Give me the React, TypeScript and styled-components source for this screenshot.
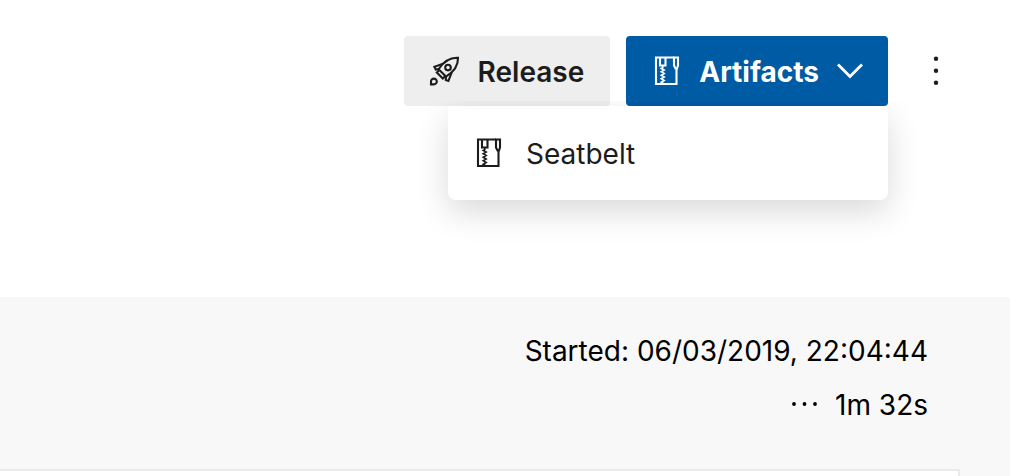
import React from "react";
import styled, { createGlobalStyle, css } from "styled-components";

const GlobalStyle = createGlobalStyle`
  * {
    box-sizing: border-box;
  }
  body {
    margin: 0;
    background: #ffffff;
    color: #000000;
    font-family: Inter, "Liberation Sans", sans-serif;
    font-size: 28px;
    line-height: 32px;
  }
`;

const Page = styled.div`
  display: flex;
  flex-direction: column;
  min-height: 100vh;
  overflow: hidden;
`;

const Header = styled.header`
  display: flex;
  justify-content: flex-end;
  align-items: flex-start;
  gap: 16px;
  min-height: 297px;
  padding: 36px 42px 0 24px;
`;

const Button = styled.button<{ $primary?: boolean }>`
  display: flex;
  align-items: center;
  gap: 18px;
  height: 70px;
  padding: 0 26px 0 24px;
  border: 0;
  border-radius: 4px;
  background: #eeeeee;
  color: #1c1c1c;
  font: inherit;
  font-weight: 600;
  cursor: pointer;
  ${(p) =>
    p.$primary &&
    css`
      gap: 17px;
      padding: 0 24px;
      background: #005ba5;
      color: #ffffff;
      font-weight: 700;
    `}
`;

const Label = styled.span`
  padding-top: 2px;
`;

const MoreButton = styled.button`
  display: flex;
  align-items: center;
  justify-content: center;
  width: 64px;
  height: 70px;
  padding: 0;
  border: 0;
  background: transparent;
  color: #1c1c1c;
  cursor: pointer;
`;

const Dropdown = styled.div`
  position: relative;
`;

const Menu = styled.div`
  position: absolute;
  top: 100%;
  right: 0;
  width: 440px;
  padding: 16px 0;
  border-radius: 0 0 8px 8px;
  background: #ffffff;
  box-shadow: 0 12px 32px rgba(0, 0, 0, 0.15);
  clip-path: inset(-5px -60px -60px -60px);
`;

const MenuItem = styled.button`
  display: flex;
  align-items: center;
  gap: 22px;
  width: 100%;
  height: 62px;
  padding: 0 24px;
  border: 0;
  background: transparent;
  color: #1c1c1c;
  font: inherit;
  text-align: left;
  cursor: pointer;
`;

const Icon = styled.svg`
  display: block;
  flex: none;
  fill: none;
  stroke: currentColor;
  stroke-width: 2.1;
`;

const Summary = styled.main`
  display: flex;
  flex: 1;
  flex-direction: column;
  gap: 38px;
  background: #f8f8f8;
`;

const Facts = styled.div`
  display: flex;
  flex-direction: column;
  align-items: flex-end;
  gap: 20px;
  padding: 36px 82px 10px 24px;
`;

const Fact = styled.div`
  display: flex;
  align-items: center;
  gap: 14px;
`;

const Panel = styled.section`
  flex: 1;
  margin-right: 50px;
  border: solid #eaeaea;
  border-width: 2px 2px 0 0;
  background: #ffffff;
`;

function RocketIcon() {
  return (
    <Icon width="32" height="32" viewBox="0 0 32 32" aria-hidden="true">
      <path d="M30 2.8C22 2.4 15.5 6.6 10.6 14.2L18 21.6C25.6 17 30.3 10.6 30 2.8Z" />
      <circle cx="20" cy="12.6" r="2.8" />
      <path d="M15 8.8L6.4 11.8L7.8 14.6L11 14" />
      <path d="M23.6 17.6L20.4 26L17.8 25L18 21.4" />
      <path d="M11.4 15L8.8 17.6L14.8 23.6L17.4 21" />
      <path d="M3 29.4V26.6A2.9 2.9 0 1 1 5.8 29.4Z" />
    </Icon>
  );
}

function ZipIcon() {
  return (
    <Icon width="32" height="32" viewBox="0 0 32 32" aria-hidden="true">
      <path d="M24 2.5H6V29H26.5V14" />
      <path d="M10 2.5V10.5H15.5V2.5" />
      <path d="M24 2.5H28V10.5L27 13.5H25.5L24 10.5Z" />
      <path
        d="M12.8 11V12.5L11.2 13.5L14.2 15L11.2 16.8L14.2 18.5L11.2 20.2L14.2 22L11.2 23.7L14.2 25.4L11.2 27.2L13.6 28.6"
        strokeWidth="1.6"
      />
    </Icon>
  );
}

function ChevronIcon() {
  return (
    <Icon width="28" height="28" viewBox="0 0 28 28" aria-hidden="true">
      <path d="M2 7.5L14 19.5L26 7.5" style={{ strokeWidth: 2.8 }} />
    </Icon>
  );
}

function MoreIcon() {
  return (
    <Icon width="32" height="32" viewBox="0 0 32 32" aria-hidden="true">
      <g fill="currentColor" stroke="none">
        <circle cx="16" cy="3.8" r="2.2" />
        <circle cx="16" cy="15.8" r="2.2" />
        <circle cx="16" cy="27.8" r="2.2" />
      </g>
    </Icon>
  );
}

function PendingIcon() {
  return (
    <Icon width="32" height="32" viewBox="0 0 32 32" aria-hidden="true">
      <g fill="currentColor" stroke="none">
        <circle cx="5" cy="16" r="1.9" />
        <circle cx="15.5" cy="16" r="1.9" />
        <circle cx="26" cy="16" r="1.9" />
      </g>
    </Icon>
  );
}

export default function App() {
  return (
    <>
      <GlobalStyle />
      <Page>
        <Header>
          <Button type="button">
            <RocketIcon />
            <Label>Release</Label>
          </Button>
          <Dropdown>
            <Button type="button" $primary aria-haspopup="menu" aria-expanded="true">
              <ZipIcon />
              <Label>Artifacts</Label>
              <ChevronIcon />
            </Button>
            <Menu role="menu">
              <MenuItem type="button" role="menuitem">
                <ZipIcon />
                <Label>Seatbelt</Label>
              </MenuItem>
            </Menu>
          </Dropdown>
          <MoreButton type="button" aria-label="More actions">
            <MoreIcon />
          </MoreButton>
        </Header>
        <Summary>
          <Facts>
            <Fact>
              <Label>Started: 06/03/2019, 22:04:44</Label>
            </Fact>
            <Fact>
              <PendingIcon />
              <Label>1m 32s</Label>
            </Fact>
          </Facts>
          <Panel />
        </Summary>
      </Page>
    </>
  );
}
